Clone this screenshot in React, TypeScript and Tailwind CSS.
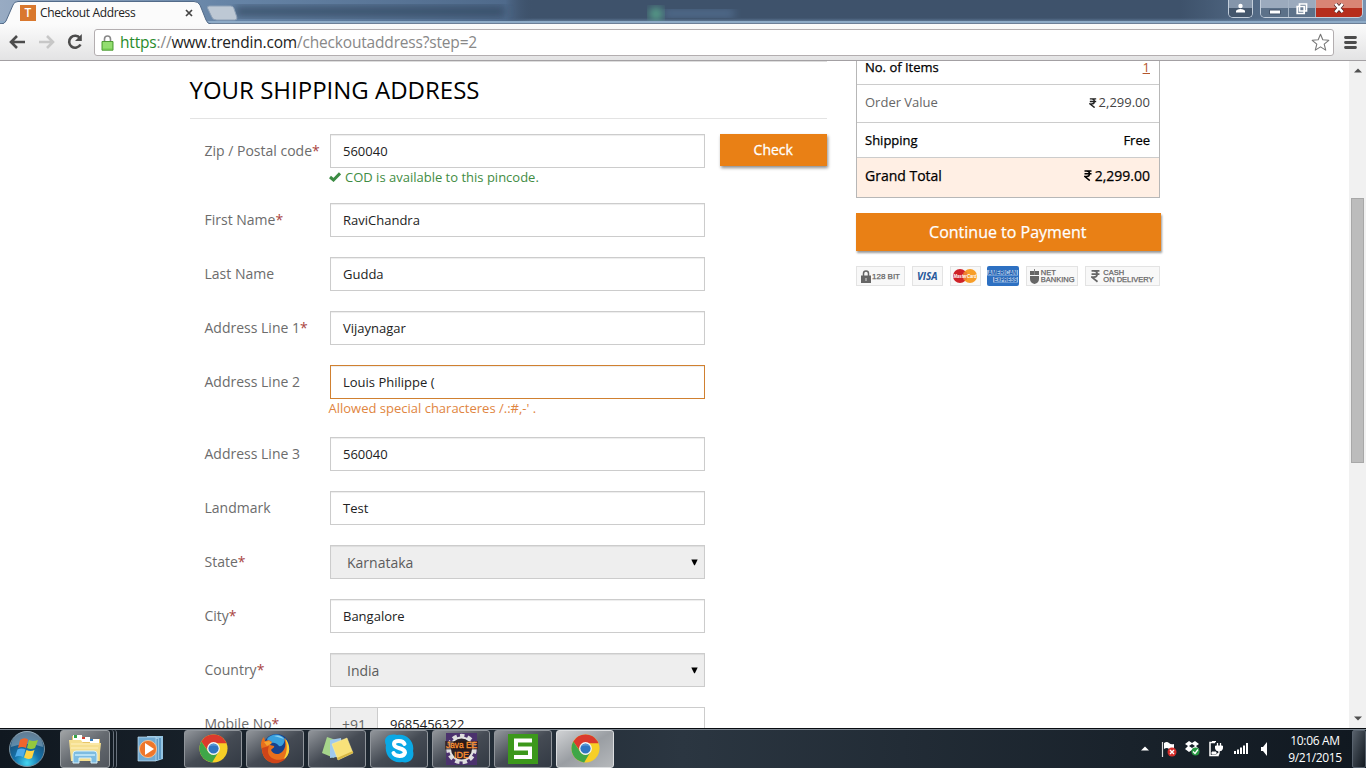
import React from "react";

type RowProps = {
  label: string;
  required?: boolean;
  className?: string;
  children: React.ReactNode;
};

function Row({ label, required, className = "h-[54px]", children }: RowProps) {
  return (
    <div className={`flex shrink-0 items-start ${className}`}>
      <label className="w-[125.500px] shrink-0 whitespace-nowrap pt-[6px] text-[14px] leading-[21px] text-[#6c6c6c]">
        {label}
        {required && <span className="text-[#a94442]">*</span>}
      </label>
      <div className="w-[375px] shrink-0">{children}</div>
    </div>
  );
}

function Field({ value, error }: { value: string; error?: boolean }) {
  return (
    <div
      className={`flex h-[34px] w-full items-center border bg-white pl-3 pt-[2px] text-[13px] text-[#222] shadow-[inset_0_1px_1px_rgba(0,0,0,0.075)] ${
        error ? "border-[#d08030]" : "border-[#ccc]"
      }`}
    >
      {value}
    </div>
  );
}

function Select({ value }: { value: string }) {
  return (
    <div className="flex h-[34px] w-full items-center justify-between border border-[#ccc] bg-[#eee] pl-4 pr-[6px] text-[14px] text-[#5c5c5c] shadow-[inset_0_1px_1px_rgba(0,0,0,0.075)]">
      <span>{value}</span>
      <svg width="7" height="7" viewBox="0 0 7 7">
        <path d="M.3 .5h6.400L3.900 6.200h-.8z" fill="#000" />
      </svg>
    </div>
  );
}

function Rupee({ className }: { className: string }) {
  return (
    <svg className={className} viewBox="0 0 8 11" fill="none" stroke="currentColor">
      <path d="M.5 1h7M.5 3.800h7M1 1h1.600c3.800 0 3.800 5.500 0 5.500H.8L5.800 10.600" strokeWidth="1.500" />
    </svg>
  );
}

function ChromeIcon() {
  return (
    <svg width="29" height="29" viewBox="0 0 30 30">
      <circle cx="15" cy="15" r="14.500" fill="#f7cf26" />
      <path d="M2.400 7.800A14.500 14.500 0 0 1 27.600 7.800L28.300 9.500H15A6.300 6.300 0 0 0 9 17z" fill="#db3a2c" />
      <path d="M2.400 7.800A14.500 14.500 0 0 0 13.600 29.400L20.400 18A6.300 6.300 0 0 1 9.400 18z" fill="#3fa648" />
      <circle cx="15" cy="15" r="6.600" fill="#f4f6f5" />
      <circle cx="15" cy="15" r="5.300" fill="#2f76c2" />
      <path d="M10.500 13a5 5 0 0 1 9 0c-3-1.400-6-1.400-9 0" fill="#5b9ad6" />
    </svg>
  );
}

function FirefoxIcon() {
  return (
    <svg width="31" height="31" viewBox="0 0 31 31">
      <circle cx="16.500" cy="14.500" r="13.500" fill="#17428c" />
      <path d="M7 6C11 0 21 0 25 6c-1 5-3 8-6 7-3-4-7-4-10-2z" fill="#39a0dd" />
      <path d="M14 3q6-2 10 3-6-2-10-3" fill="#8bd0f0" />
      <path d="M2 17C0 12 1 7 4 4l1 4 4-1 3 2-2 3 4 1c1 2-2 2-3 4 2 5 8 5 11 2 4-4 4-9 2-14 5 5 7 12 3 18-5 8-18 9-23 1-1-2-2-5-2-7" fill="#e8701c" />
      <path d="M25 5c6 7 6 17-2 22 4-6 5-14 2-22" fill="#f9d33a" />
      <path d="M2 15c0 8 4 13 10 15 6 1 11-1 14-5-8 4-17 1-18-6 0-2 0-4 1-6z" fill="#cf4519" />
      <path d="M4 9l5-1 3 2-5 3z" fill="#f6a32f" />
    </svg>
  );
}

function ExplorerIcon() {
  return (
    <svg width="34" height="30" viewBox="0 0 34 30">
      <path d="M4 2h10l2 3h16v22H4z" fill="#e8c667" />
      <path d="M5 1h9v5H5z" fill="#fff" />
      <path d="M6 1h3v3H6z" fill="#36a34a" />
      <path d="M13 3h9v5h-9z" fill="#fff" />
      <path d="M14 3h3v2h-3z" fill="#d34332" />
      <path d="M22 5h9v5h-9z" fill="#fff" />
      <path d="M22 5h3v2h-3z" fill="#347ebd" />
      <path d="M1 6h12l2 3h18l-2 18H3z" fill="#f5df8f" />
      <path d="M3 10h28M3 14h27" stroke="#fff1bd" />
      <path d="M5 29v-9q0-3 3-3h18q3 0 3 3v9h-6v-5H11v5z" fill="#7dbce1" stroke="#d7f0fa" />
      <path d="M7 20h20v2H7z" fill="#b6e0f4" />
    </svg>
  );
}

function MediaIcon() {
  return (
    <svg width="27" height="26" viewBox="0 0 27 26">
      <path d="M10 0h16v23l-6 2H10z" fill="#94c4e2" />
      <path d="M20 3v21M23 2v21" stroke="#2b72a8" />
      <path d="M1 1h18v24H1z" fill="#70aad2" stroke="#c4e0f0" strokeWidth=".7" />
      <circle cx="11" cy="13" r="8.600" fill="#ee762a" stroke="#fbc998" strokeWidth=".8" />
      <path d="M8 7v12l9-6z" fill="#fff" />
    </svg>
  );
}

function NotesIcon() {
  return (
    <svg width="33" height="28" viewBox="0 0 33 28">
      <path d="M6 2l12 4-5 17L1 18z" fill="#a6d58b" />
      <path d="M9 5l11-2 2 18-13 2z" fill="#9fc9ee" />
      <path d="M11 9l15-6 6 15-15 7z" fill="#f8e27a" stroke="#fff1a0" strokeWidth=".5" />
      <path d="M16 23l16-7v2l-15 7z" fill="#d8b844" />
    </svg>
  );
}

function SkypeIcon() {
  return (
    <svg width="31" height="31" viewBox="0 0 31 31">
      <path d="M2 12C-1 6 3 0 13 2c9-2 18 6 16 16 2 7-3 13-11 11C8 31 0 22 2 12" fill="#0aa8e5" />
      <path d="M20.500 11c-1.500-4-10.500-4-10.500 0 0 5.500 11 3 11 8.500-1 5-10 4-11.500.5" fill="none" stroke="#fff" strokeWidth="4" strokeLinecap="round" />
    </svg>
  );
}

function JavaIcon() {
  return (
    <svg width="33" height="32" viewBox="0 0 33 32">
      <path d="M1 0h31v32H1z" fill="#4b326d" />
      <circle cx="16.500" cy="16" r="13.200" fill="none" stroke="#ddd" strokeWidth="4" strokeDasharray="4.400 3.140" />
      <circle cx="16.500" cy="16" r="11.500" fill="#292029" stroke="#e2e2e2" strokeWidth="2" />
      <path d="M0 8h33v8.500H0z" fill="#2b1710" opacity=".65" />
      <g fontFamily="Liberation Sans" fontSize="9" fill="#ff9130" stroke="#ff9130" strokeWidth=".3">
        <text x="1" y="15" textLength="31" lengthAdjust="spacingAndGlyphs">Java EE</text>
        <text x="9" y="25" textLength="15" lengthAdjust="spacingAndGlyphs">IDE</text>
      </g>
    </svg>
  );
}

function SIcon() {
  return (
    <svg width="30" height="30" viewBox="0 0 30 30">
      <path d="M0 0h30v30H0z" fill="#3c981b" />
      <path d="M24 6.500H8v8h14V23H6" fill="none" stroke="#fff" strokeWidth="4" />
    </svg>
  );
}

function TaskButton({ children, active }: { children: React.ReactNode; active?: boolean }) {
  return (
    <div
      className={`flex h-[38px] w-[58px] shrink-0 items-center justify-center rounded-[3px] border ${
        active
          ? "border-[#dcdee0] bg-linear-to-br from-[#d0d2d4] via-[#9a9ea3] to-[#b5b8bb]"
          : "border-[#90959b] bg-linear-to-br from-[#92969b] via-[#454b54] to-[#333a44]"
      }`}
    >
      {children}
    </div>
  );
}

function Browser() {
  return (
    <header className="h-[61px] shrink-0 font-['Open_Sans',sans-serif]">
      <div className="grid h-6 bg-linear-to-b from-[#3e526b] from-75% to-[#7897b8]">
        <svg className="col-start-1 row-start-1" width="1366" height="24" viewBox="0 0 1366 24">
          <defs>
            <filter id="soft"><feGaussianBlur stdDeviation="4" /></filter>
            <linearGradient id="glass" x1="0" x2="1">
              <stop offset="0" stopColor="#98abc3" />
              <stop offset=".16" stopColor="#6785a7" />
              <stop offset=".37" stopColor="#4f6a8b" />
              <stop offset=".39" stopColor="#3e526b" stopOpacity="0" />
            </linearGradient>
            <linearGradient id="fade" x1="0" x2="1">
              <stop offset="0" stopColor="#6c88a8" stopOpacity="0" />
              <stop offset="1" stopColor="#7893b2" />
            </linearGradient>
          </defs>
          <path d="M0 0h1366v24H0z" fill="url(#glass)" />
          <path d="M1180 0h186v24h-186z" fill="url(#fade)" />
          <path d="M235 6h270v11H235z" fill="#33465e" opacity=".75" filter="url(#soft)" />
          <path d="M664 10h70v7h-70z" fill="#6283ac" opacity=".65" filter="url(#soft)" />
          <circle cx="656" cy="14" r="7" fill="#58a48b" filter="url(#soft)" />
          <path d="M0 22h1366" stroke="#8eabc7" strokeWidth="2" />
          <path d="M0 23.500h1366" stroke="#6c7f97" />
          <path d="M207.500 8q-.5-2 2-2h21q2.500 0 3.300 2l3 9q.8 3-2 3h-18q-4 0-5-3z" fill="#bdc8d4" stroke="#8da0b6" />
          <path d="M0 24q5 0 6-3l7-16q1-3.500 5-3.500h176q4 0 6 3.500l6 15q1.500 4 5 4" fill="#fbfbfb" stroke="#536b89" />
        </svg>
        <div className="col-start-1 row-start-1 flex h-6 items-start">
          <span className="ml-5 mt-[5px] flex h-4 w-4 items-center justify-center bg-[#d9782e] text-[12px] font-semibold text-white">T</span>
          <span className="ml-1 mt-[4px] w-[145px] text-[12px] leading-[18px] tracking-[-0.36px] text-[#222]">Checkout Address</span>
          <svg className="mt-[9px]" width="9" height="9" viewBox="0 0 9 9">
            <path d="M1 1l6 6M7 1L1 7" stroke="#444" strokeWidth="1.700" />
          </svg>
          <div className="ml-auto mr-[7px] flex h-[18px] overflow-hidden rounded-b-[5px] border border-t-0 border-[#c3cedb]">
            <div className="flex w-[23px] items-center justify-center bg-linear-to-b from-[#8495aa] from-50% to-[#44566c] to-50%">
              <svg className="mb-px" width="11" height="11" viewBox="0 0 11 11"><circle cx="5.500" cy="3" r="2.200" fill="#fff" /><path d="M1 9.500V8Q1.500 6.300 5.500 6q4 .3 4.500 2v1.500z" fill="#fff" /></svg>
            </div>
          </div>
          <div className="mr-[3px] flex h-[18px] w-[103px] overflow-hidden rounded-b-[5px] border border-t-0 border-[#c3cedb]">
            <div className="flex w-[28px] items-center justify-center border-r border-[#a5b4c5] bg-linear-to-b from-[#9baabd] from-50% to-[#5c7189] to-50%">
              <svg width="12" height="12" viewBox="0 0 12 12"><path d="M.5 7h11v4H.5z" fill="#fff" stroke="#46576d" /></svg>
            </div>
            <div className="flex w-[27px] items-center justify-center border-r border-[#a5b4c5] bg-linear-to-b from-[#9baabd] from-50% to-[#5c7189] to-50%">
              <svg width="12" height="12" viewBox="0 0 12 12"><path d="M3.500 1h7v7h-7zM1.200 3.500h7v7h-7z" fill="#6d8097" stroke="#fff" strokeWidth="1.700" /></svg>
            </div>
            <div className="flex flex-1 items-center justify-center bg-linear-to-b from-[#d98575] from-50% to-[#b62d1c] to-50%">
              <svg className="mb-px" width="12" height="10" viewBox="0 0 13 11"><path d="M2.500 1l8 9M10.500 1l-8 9" stroke="#512b2b" strokeWidth="4.500" /><path d="M2.500 1l8 9M10.500 1l-8 9" stroke="#fff" strokeWidth="2.800" /></svg>
            </div>
          </div>
        </div>
      </div>
      <div className="flex h-[37px] items-start border-b border-[#a3a0a3] bg-linear-to-b from-[#fbfbfb] to-[#e3e3e4]">
        <svg className="ml-[9px] mt-[11px]" width="16" height="14" viewBox="0 0 16 14"><path d="M8 1L2 7l6 6M2 7h14" fill="none" stroke="#4c4c4c" strokeWidth="2.600" /></svg>
        <svg className="ml-[14px] mt-[11px]" width="16" height="14" viewBox="0 0 16 14"><path d="M8 1l6 6-6 6M0 7h14" fill="none" stroke="#c7c7c7" strokeWidth="2.600" /></svg>
        <svg className="ml-[12px] mt-[10px]" width="16" height="16" viewBox="0 0 16 16"><path d="M13 4.200A6 6 0 1 0 13.500 10.500" fill="none" stroke="#4c4c4c" strokeWidth="2.600" /><path d="M14.800 0v7H8z" fill="#4c4c4c" /></svg>
        <div className="ml-[11px] mt-[5px] flex h-[27px] w-[1240px] items-center rounded-[3px] border border-[#b3aeb0] bg-white">
          <svg className="ml-[6px]" width="13" height="16" viewBox="0 0 13 16">
            <path d="M3.500 7V4q0-3 3-3t3 3v3" fill="none" stroke="#888" strokeWidth="1.600" />
            <path d="M1 6.500h11v8.700H1z" fill="#82d65e" stroke="#4f9b36" />
            <path d="M2 8h9M2 10h9M2 12h9" stroke="#b6ec92" strokeWidth=".7" />
          </svg>
          <span className="mb-px ml-[6px] whitespace-nowrap text-[15.500px] leading-6 tracking-[-0.18px] text-[#888]">
            <span className="text-[#298b2c]">https</span>://<span className="text-[#222]">www.trendin.com</span>/checkoutaddress?step=2
          </span>
          <svg className="ml-auto mr-[3px]" width="19" height="19" viewBox="0 0 19 19"><path d="M9.500 1.200l2.300 5.600 6 .5-4.600 3.900 1.500 5.900-5.200-3.200-5.200 3.200 1.500-5.900L1.200 7.300l6-.5z" fill="none" stroke="#777" strokeWidth="1.100" strokeLinejoin="round" /></svg>
        </div>
        <svg className="ml-[10px] mt-3" width="13" height="14" viewBox="0 0 13 14"><path d="M1.500 1.500h10M1.500 6.500h10M1.500 11.500h10" stroke="#4c4c4c" strokeWidth="2.800" strokeLinecap="round" /></svg>
      </div>
    </header>
  );
}

function AddressForm() {
  return (
    <section className="ml-[189.500px] w-[637px] shrink-0">
      <div className="h-[58px] border-b border-t border-b-[#e3e3e3] border-t-[#ddd]">
        <h1 className="whitespace-nowrap pt-[11px] text-[24px] leading-[34px] text-black">YOUR SHIPPING ADDRESS</h1>
      </div>
      <div className="flex flex-col pl-[15px] pt-[15px]">
        <div className="flex justify-between">
          <Row label="Zip / Postal code" required className="h-[69px]">
            <Field value="560040" />
            <div className="-ml-px -mt-px flex items-center whitespace-nowrap text-[13px] leading-[20px] text-[#3f8c43]">
              <svg className="mr-[4px]" width="12" height="10" viewBox="0 0 12 10"><path d="M1 5l3.500 3L11 1.300" fill="none" stroke="#3c8c44" strokeWidth="3" /></svg>
              COD is available to this pincode.
            </div>
          </Row>
          <button className="h-8 w-[106.500px] bg-[#e98015] pb-px text-[14px] text-white shadow-[1px_2px_3px_rgba(0,0,0,0.45)] [-webkit-text-stroke:0.3px_white]">Check</button>
        </div>
        <Row label="First Name" required><Field value="RaviChandra" /></Row>
        <Row label="Last Name"><Field value="Gudda" /></Row>
        <Row label="Address Line 1" required><Field value="Vijaynagar" /></Row>
        <Row label="Address Line 2" className="h-[72px]">
          <Field value="Louis Philippe (" error />
          <div className="-ml-[1.500px] -mt-px whitespace-nowrap text-[13px] leading-[20px] text-[#df8541]">Allowed special characteres /.:#,-' .</div>
        </Row>
        <Row label="Address Line 3"><Field value="560040" /></Row>
        <Row label="Landmark"><Field value="Test" /></Row>
        <Row label="State" required><Select value="Karnataka" /></Row>
        <Row label="City" required><Field value="Bangalore" /></Row>
        <Row label="Country" required><Select value="India" /></Row>
        <Row label="Mobile No" required>
          <div className="flex h-[34px] border border-[#ccc]">
            <span className="flex w-[47px] items-center justify-center border-r border-[#ccc] bg-[#eee] text-[14px] text-[#666]">+91</span>
            <span className="flex items-center pl-3 pt-px text-[13px] text-[#222]">9685456322</span>
          </div>
        </Row>
      </div>
    </section>
  );
}

function Badges() {
  const box = "flex h-5 items-center justify-center border border-[#e3e3e3] bg-[#f8f8f8] font-['Liberation_Sans',sans-serif] text-[#666]";
  return (
    <div className="mt-[15px] flex w-[304px] justify-between">
      <div className={`${box} w-[49px] gap-[1px] text-[8px] [-webkit-text-stroke:0.25px_#666]`}>
        <svg width="10" height="13" viewBox="0 0 10 13"><path d="M2.500 6V3.500q0-2.500 2.500-2.500t2.500 2.500V6" fill="none" stroke="#666" strokeWidth="1.500" /><path d="M0 5.500h10V13H0z" fill="#666" /><path d="M5 8v3" stroke="#ddd" /></svg>
        <span className="whitespace-nowrap pt-[2px]">128 BIT</span>
      </div>
      <div className={`${box} w-[31px]`}><span className="font-['Open_Sans',sans-serif] text-[10px] font-bold italic text-[#25579a]">VISA</span></div>
      <div className={`${box} w-[31px]`}>
        <svg width="26" height="16" viewBox="0 0 26 16"><circle cx="8" cy="8" r="7" fill="#cf2228" /><circle cx="18" cy="8" r="7" fill="#f79e28" /><path d="M11 5h4M10 7h6M11 9h4M11 11h4" stroke="#e7643c" /><text x="13" y="10.300" textAnchor="middle" fontFamily="Liberation Sans" fontStyle="italic" fontWeight="700" fontSize="5.800" textLength="23" lengthAdjust="spacingAndGlyphs" fill="#fff">MasterCard</text></svg>
      </div>
      <svg width="32" height="20" viewBox="0 0 32 20">
        <rect width="32" height="20" rx="2" fill="#2d70c2" />
        <path d="M0 4h31v5.500H0zM6 11h25v5.500H6z" fill="#c3d8f0" opacity=".75" />
        <g fontFamily="Liberation Sans" fontWeight="700" fontSize="6.500" fill="#2260b0"><text x="1" y="9" textLength="29" lengthAdjust="spacingAndGlyphs">AMERICAN</text><text x="7" y="16" textLength="23" lengthAdjust="spacingAndGlyphs">EXPRESS</text></g>
      </svg>
      <div className={`${box} w-[52px] gap-[2px] text-[7.500px] leading-[7.500px] [-webkit-text-stroke:0.25px_#666]`}>
        <svg width="9" height="15" viewBox="0 0 9 15"><path d="M0 7h9v3q0 4-4.500 5Q0 14 0 10zM0 2h4v4H0zM5 2h4v4H5z" fill="#666" /><path d="M4.500 0v6" stroke="#666" strokeWidth=".8" /></svg>
        <span>NET<br />BANKING</span>
      </div>
      <div className={`${box} w-[75px] gap-[3px] text-[7.500px] leading-[7.500px] [-webkit-text-stroke:0.25px_#666]`}>
        <Rupee className="h-[14px] w-[9px]" /><span className="whitespace-nowrap">CASH<br />ON DELIVERY</span>
      </div>
    </div>
  );
}

function Summary() {
  const strong = "text-black [-webkit-text-stroke:0.25px_black]";
  return (
    <aside className="ml-[29.500px] w-[304.500px] shrink-0">
      <div className="w-[304px] border border-t-0 border-[#b7b7b7] text-[13px]">
        <div className="flex h-6 justify-between border-b border-[#ccc] pl-2 pr-[9px] leading-[12px]"><span className={strong}>No. of Items</span><span className="text-[#b4562b] underline underline-offset-1">1</span></div>
        <div className="flex h-[38px] items-center justify-between border-b border-[#ccc] pb-[2px] pl-2 pr-[9px] text-[#666]"><span>Order Value</span><span className="flex items-center gap-[2px] text-[#444]"><Rupee className="h-[10px] w-[8px] text-[#222]" />2,299.00</span></div>
        <div className={`flex h-[35px] items-center justify-between border-b border-[#ccc] pl-2 pr-[9px] pt-px ${strong}`}><span>Shipping</span><span>Free</span></div>
        <div className={`flex h-[39px] items-center justify-between bg-[#ffefe4] pb-[4px] pl-2 pr-[9px] text-[14px] ${strong}`}><span>Grand Total</span><span className="flex items-center gap-[3px]"><Rupee className="h-[11px] w-[8px]" />2,299.00</span></div>
      </div>
      <button className="mt-[15px] h-[38px] w-full bg-[#e98015] pr-px text-[16px] text-white shadow-[1px_2px_2px_rgba(0,0,0,0.4)] [-webkit-text-stroke:0.25px_white]">Continue to Payment</button>
      <Badges />
    </aside>
  );
}

function Taskbar() {
  return (
    <footer className="flex h-10 shrink-0 items-center border-t border-[#080c10] bg-linear-to-r from-[#101820] via-[#2b3641] via-50% to-[#101820] font-['Open_Sans',sans-serif] text-white shadow-[inset_0_1px_0_#7b858f]">
      <svg className="ml-2 shrink-0" width="38" height="38" viewBox="0 0 38 38">
        <defs><radialGradient id="orb" cx=".5" cy=".9" r=".9"><stop offset="0" stopColor="#45d6f0" /><stop offset=".4" stopColor="#1473ad" /><stop offset="1" stopColor="#203c58" /></radialGradient></defs>
        <circle cx="19" cy="19" r="17.500" fill="url(#orb)" stroke="#77909f" />
        <path d="M3 17a16 16 0 0 1 32 0q-16-6-32 0" fill="#c5dae5" opacity=".4" />
        <path d="M12 10q4-3 8-.5L18 18q-4-2-8 0z" fill="#ef652d" /><path d="M21 10q4 2 9 0l-3 8q-4 2-8 0z" fill="#94c83d" /><path d="M9.500 19.500q4-2 8 0L15 27q-4-2-8 0z" fill="#4eacea" /><path d="M18.500 20q4 2 8 0L24 28q-4 2-8-.5z" fill="#ffd443" />
      </svg>
      <div className="ml-[14px] flex h-[38px] w-[57px] shrink-0 rounded-[3px] border-r border-[#68717c]">
        <div className="flex w-[54px] rounded-[3px] border-r border-[#68717c]">
          <div className="flex w-[50px] items-center justify-center rounded-[3px] border border-[#999ea2] bg-linear-to-br from-[#a1a4a6] via-[#656a70] to-[#51565d]"><ExplorerIcon /></div>
        </div>
      </div>
      <div className="ml-[20px] w-[47px] shrink-0"><MediaIcon /></div>
      <div className="flex gap-1">
        <TaskButton><ChromeIcon /></TaskButton>
        <TaskButton><FirefoxIcon /></TaskButton>
        <TaskButton><NotesIcon /></TaskButton>
        <TaskButton><SkypeIcon /></TaskButton>
        <TaskButton><JavaIcon /></TaskButton>
        <TaskButton><SIcon /></TaskButton>
        <TaskButton active><ChromeIcon /></TaskButton>
      </div>
      <div className="ml-auto flex h-full items-center">
        <svg className="mr-[12px]" width="8" height="5" viewBox="0 0 8 5"><path d="M0 4.500L4 .5l4 4z" fill="#fff" /></svg>
        <svg className="mr-[8px]" width="16" height="16" viewBox="0 0 16 16"><path d="M1.500 1v15" stroke="#ddd" strokeWidth="1.200" /><path d="M3 2q3-2 5 0t5 1v6q-3 1-5-1T3 8z" fill="#fff" /><circle cx="11" cy="11" r="4.500" fill="#d52d2a" /><path d="M9 9l4 4M13 9l-4 4" stroke="#fff" strokeWidth="1.400" /></svg>
        <svg className="mr-[9px]" width="15" height="15" viewBox="0 0 15 15"><path d="M0 3l4-3 3 2 3-2 4 3-3 2 3 3-4 3-3-2-3 2-4-3 3-3zM4 5l3 2 3-2-3-2z" fill="#fff" fillRule="evenodd" /><circle cx="10.500" cy="10.500" r="4" fill="#289943" /><path d="M8 10.500l2 2 3-4" stroke="#fff" fill="none" strokeWidth="1.300" /></svg>
        <svg className="mr-[11px]" width="14" height="16" viewBox="0 0 14 16" fill="none" stroke="#fff"><path d="M6 1.500H1v13h8V12M3 .5h4" strokeWidth="1.500" /><path d="M3 11h4v2H3z" fill="#fff" /><path d="M8.500 2v4M11.500 2v4M10 10v2q0 2-3 2" strokeWidth="1.300" /><path d="M6.500 5h7v2q0 3-3.500 3T6.500 7z" fill="#fff" /></svg>
        <svg className="mr-[12px]" width="15" height="11" viewBox="0 0 15 11"><path d="M0 8h2v3H0zM3 6.500h2V11H3zM6 4.500h2V11H6zM9 2.500h2V11H9zM12 0h2v11h-2z" fill="#fff" /></svg>
        <svg className="mr-[19px]" width="8" height="14" viewBox="0 0 8 14"><path d="M0 5h2l4-5v14l-4-5H0z" fill="#fff" /></svg>
        <div className="mr-[10px] flex w-[54px] flex-col items-center whitespace-nowrap text-[12px] leading-[17px] tracking-[-0.350px]"><span>10:06 AM</span><span>9/21/2015</span></div>
        <div className="h-[38px] w-[14px] rounded-[2px] border border-[#58626d] bg-linear-to-br from-[#58616b] to-[#121920]" />
      </div>
    </footer>
  );
}

export default function App() {
  return (
    <div className="flex h-[768px] w-[1366px] flex-col overflow-hidden bg-white">
      <Browser />
      <main className="flex min-h-0 flex-1 items-start overflow-hidden font-['Open_Sans',sans-serif]">
        <AddressForm />
        <Summary />
        <div className="ml-auto flex h-full w-[17px] shrink-0 flex-col items-center bg-[#f1f1f1]">
          <svg className="mt-[7px] shrink-0" width="8" height="5" viewBox="0 0 8 5"><path d="M0 4.500L4 .5l4 4z" fill="#505050" /></svg>
          <div className="mt-[125px] h-[265px] w-[13px] shrink-0 border border-[#a8a8a8] bg-[#bcbcbc]" />
          <svg className="mb-[7px] mt-auto shrink-0" width="8" height="5" viewBox="0 0 8 5"><path d="M0 .5h8l-4 4z" fill="#505050" /></svg>
        </div>
      </main>
      <Taskbar />
    </div>
  );
}
